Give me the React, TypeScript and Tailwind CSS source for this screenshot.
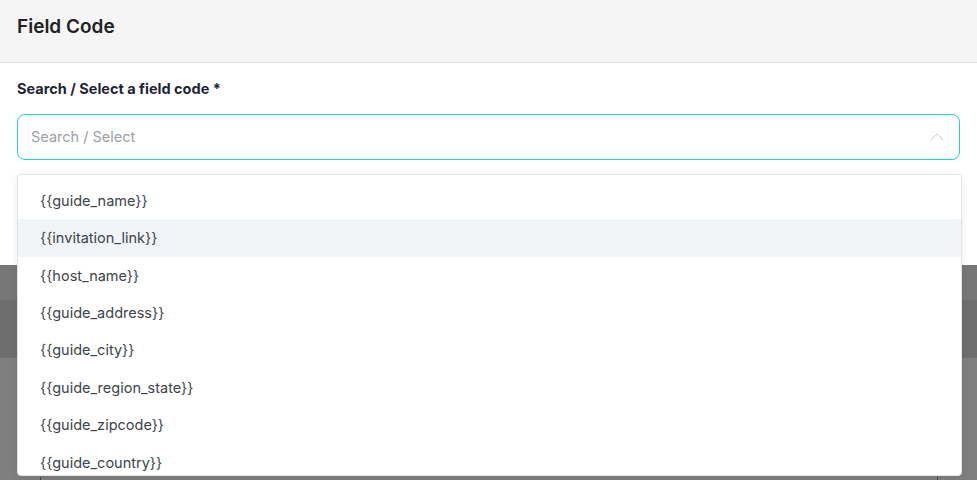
import { ChevronUp } from "lucide-react";

const fieldCodes = [
  "guide_name",
  "invitation_link",
  "host_name",
  "guide_address",
  "guide_city",
  "guide_region_state",
  "guide_zipcode",
  "guide_country",
];

const App = () => {
  return (
    <div
      className="relative h-[480px] w-[977px] overflow-hidden bg-[#7f7f7f]"
      style={{ fontFamily: "Inter, 'Noto Sans', sans-serif" }}
    >
      {/* modal */}
      <div className="h-[265px] bg-white">
        <div className="flex h-[63px] items-center border-b border-[#dedede] bg-[#f5f5f5] px-[17px] pb-[7px]">
          <h1 className="text-[19px] font-semibold text-[#222]">Field Code</h1>
        </div>
        <div className="px-[17px] pt-[15px]">
          <label className="block text-[14.5px] font-bold text-[#1c2434]">
            Search / Select a field code *
          </label>
          <div className="mt-[14px] flex h-[46px] items-center justify-between rounded-lg border border-[#1cd3c6] pl-[13px] pr-[10px]">
            <span className="text-[14.5px] text-[#9aa0a8]">Search / Select</span>
            <ChevronUp size={24} strokeWidth={1} className="text-[#c8c8c8]" />
          </div>
        </div>
      </div>

      {/* backdrop behind */}
      <div className="h-[35px] bg-[#777777]" />
      <div className="h-[58px] bg-[#6e6e6e]" />
      <div className="relative h-[122px]">
        <div className="absolute bottom-0 left-[40px] h-[3px] w-px bg-[#444]" />
        <div className="absolute bottom-0 left-[937px] h-[3px] w-px bg-[#444]" />
      </div>

      {/* dropdown menu */}
      <div className="absolute left-[17px] top-[174px] h-[302px] w-[945px] overflow-hidden rounded-[4px] border border-[#e3e3e8] bg-white pt-[7px] shadow-[0_2px_8px_rgba(0,0,0,0.08)]">
        {fieldCodes.map((code, i) => (
          <div
            key={code}
            className={
              i === 1
                ? "flex h-[37.4px] items-center bg-[#f1f4f7] px-[22px] text-[14.5px] text-[#3d434b]"
                : "flex h-[37.4px] items-center px-[22px] text-[14.5px] text-[#3d434b]"
            }
          >
            {"{{" + code + "}}"}
          </div>
        ))}
      </div>
    </div>
  );
};

export default App;
